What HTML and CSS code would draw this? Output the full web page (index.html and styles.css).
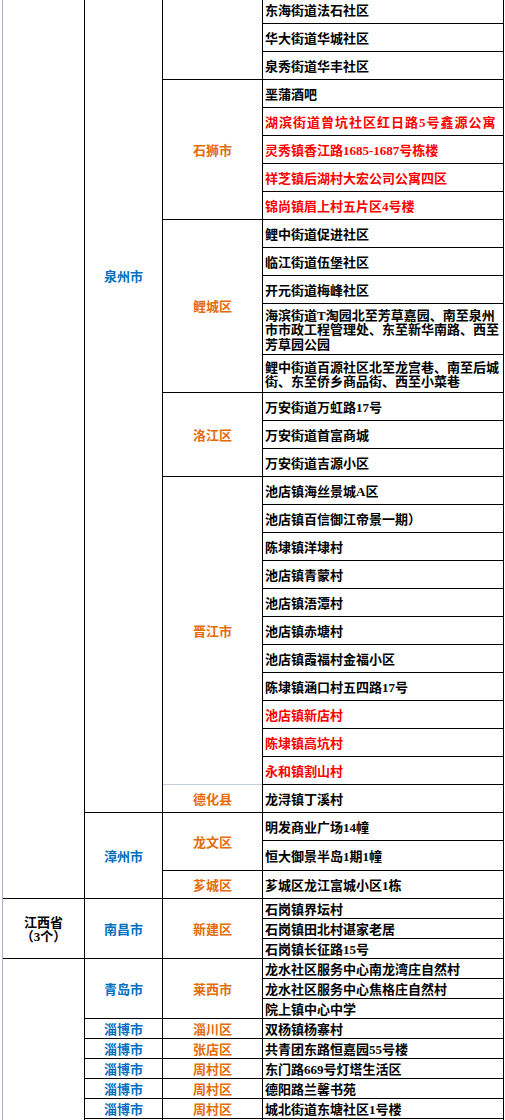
FILE: index.html
```html
<!DOCTYPE html>
<html lang="zh-CN">
<head>
<meta charset="utf-8">
<title>地址表</title>
<link rel="stylesheet" href="styles.css">
</head>
<body>
<div class="sheet">
  <div class="cell prov span-31"></div>
  <div class="cell city span-28 lift blue">泉州市</div>
  <div class="cell dist span-3"></div>
  <div class="cell addr">东海街道法石社区</div>
  <div class="cell addr">华大街道华城社区</div>
  <div class="cell addr">泉秀街道华丰社区</div>

  <div class="cell dist span-5 orange">石狮市</div>
  <div class="cell addr">垩蒲酒吧</div>
  <div class="cell addr red spaced">湖滨街道曾坑社区红日路5号鑫源公寓</div>
  <div class="cell addr red">灵秀镇香江路1685-1687号栋楼</div>
  <div class="cell addr red">祥芝镇后湖村大宏公司公寓四区</div>
  <div class="cell addr red">锦尚镇眉上村五片区4号楼</div>

  <div class="cell dist span-5 orange">鲤城区</div>
  <div class="cell addr">鲤中街道促进社区</div>
  <div class="cell addr">临江街道伍堡社区</div>
  <div class="cell addr">开元街道梅峰社区</div>
  <div class="cell addr h50">海滨街道T淘园北至芳草嘉园、南至泉州市市政工程管理处、东至新华南路、西至芳草园公园</div>
  <div class="cell addr h37">鲤中街道百源社区北至龙宫巷、南至后城街、东至侨乡商品街、西至小菜巷</div>

  <div class="cell dist span-3 orange">洛江区</div>
  <div class="cell addr">万安街道万虹路17号</div>
  <div class="cell addr">万安街道首富商城</div>
  <div class="cell addr">万安街道吉源小区</div>

  <div class="cell dist span-11 orange">晋江市</div>
  <div class="cell addr">池店镇海丝景城A区</div>
  <div class="cell addr">池店镇百信御江帝景一期）</div>
  <div class="cell addr">陈埭镇洋埭村</div>
  <div class="cell addr">池店镇青蒙村</div>
  <div class="cell addr">池店镇浯潭村</div>
  <div class="cell addr">池店镇赤塘村</div>
  <div class="cell addr">池店镇霞福村金福小区</div>
  <div class="cell addr">陈埭镇涵口村五四路17号</div>
  <div class="cell addr red">池店镇新店村</div>
  <div class="cell addr red">陈埭镇高坑村</div>
  <div class="cell addr red">永和镇割山村</div>

  <div class="cell dist soft-top orange">德化县</div>
  <div class="cell addr">龙浔镇丁溪村</div>

  <div class="cell city span-3 blue">漳州市</div>
  <div class="cell dist span-2 orange">龙文区</div>
  <div class="cell addr">明发商业广场14幢</div>
  <div class="cell addr h29">恒大御景半岛1期1幢</div>
  <div class="cell dist orange">芗城区</div>
  <div class="cell addr">芗城区龙江富城小区1栋</div>

  <div class="cell prov span-3">江西省<br>（3个）</div>
  <div class="cell city span-3 blue">南昌市</div>
  <div class="cell dist span-3 orange">新建区</div>
  <div class="cell addr h19">石岗镇界坛村</div>
  <div class="cell addr h19">石岗镇田北村谌家老居</div>
  <div class="cell addr h19">石岗镇长征路15号</div>

  <div class="cell prov span-9"></div>
  <div class="cell city span-3 blue">青岛市</div>
  <div class="cell dist span-3 orange">莱西市</div>
  <div class="cell addr h19">龙水社区服务中心南龙湾庄自然村</div>
  <div class="cell addr h19">龙水社区服务中心焦格庄自然村</div>
  <div class="cell addr h19">院上镇中心中学</div>

  <div class="cell city blue">淄博市</div>
  <div class="cell dist orange">淄川区</div>
  <div class="cell addr h19">双杨镇杨寨村</div>

  <div class="cell city blue">淄博市</div>
  <div class="cell dist orange">张店区</div>
  <div class="cell addr h19">共青团东路恒嘉园55号楼</div>

  <div class="cell city blue">淄博市</div>
  <div class="cell dist orange">周村区</div>
  <div class="cell addr h19">东门路669号灯塔生活区</div>

  <div class="cell city blue">淄博市</div>
  <div class="cell dist orange">周村区</div>
  <div class="cell addr h19">德阳路兰馨书苑</div>

  <div class="cell city blue">淄博市</div>
  <div class="cell dist orange">周村区</div>
  <div class="cell addr h19">城北街道东塘社区1号楼</div>

  <div class="cell city"></div>
  <div class="cell dist"></div>
  <div class="cell addr h19"></div>
</div>
</body>
</html>
```

FILE: styles.css
```css
html, body {
  margin: 0;
  padding: 0;
  background: #fff;
}

body {
  font-family: "Liberation Serif", "Noto Sans CJK SC", serif;
  font-size: 13px;
  font-weight: 700;
  color: #000;
  overflow: hidden;
}

.sheet {
  display: grid;
  grid-template-columns: 81px 77px 99px 240px;
  gap: 1px;
  width: max-content;
  margin: -4px 0 0 2px;
  background: #000;
  border-left: 1px solid #a9b4cc;
  border-right: 1px solid #000;
}

.cell {
  box-sizing: border-box;
  display: flex;
  align-items: center;
  padding-top: 3px;
  line-height: 14.5px;
  background: #fff;
}

.prov {
  grid-column: 1;
  justify-content: center;
  text-align: center;
}

.city {
  grid-column: 2;
  justify-content: center;
}

.dist {
  grid-column: 3;
  justify-content: center;
}

.addr {
  grid-column: 4;
  height: 27px;
  padding-left: 2px;
  padding-right: 1px;
}

.addr.h19 { height: 19px; }
.addr.h29 { height: 29px; }
.addr.h37 { height: 37px; }
.addr.h50 { height: 50px; }

.span-2 { grid-row: span 2; }
.span-3 { grid-row: span 3; }
.span-5 { grid-row: span 5; }
.span-9 { grid-row: span 9; }
.span-11 { grid-row: span 11; }
.span-28 { grid-row: span 28; }
.span-31 { grid-row: span 31; }

/* merged cell whose upper part is scrolled out of view */
.lift { padding-bottom: 256px; }

.soft-top { box-shadow: 0 -1px 0 #c5ccda; }

.spaced { letter-spacing: 1px; }

.red { color: #ff0000; }
.orange { color: #e46c0a; }
.blue { color: #0070c0; }
```
